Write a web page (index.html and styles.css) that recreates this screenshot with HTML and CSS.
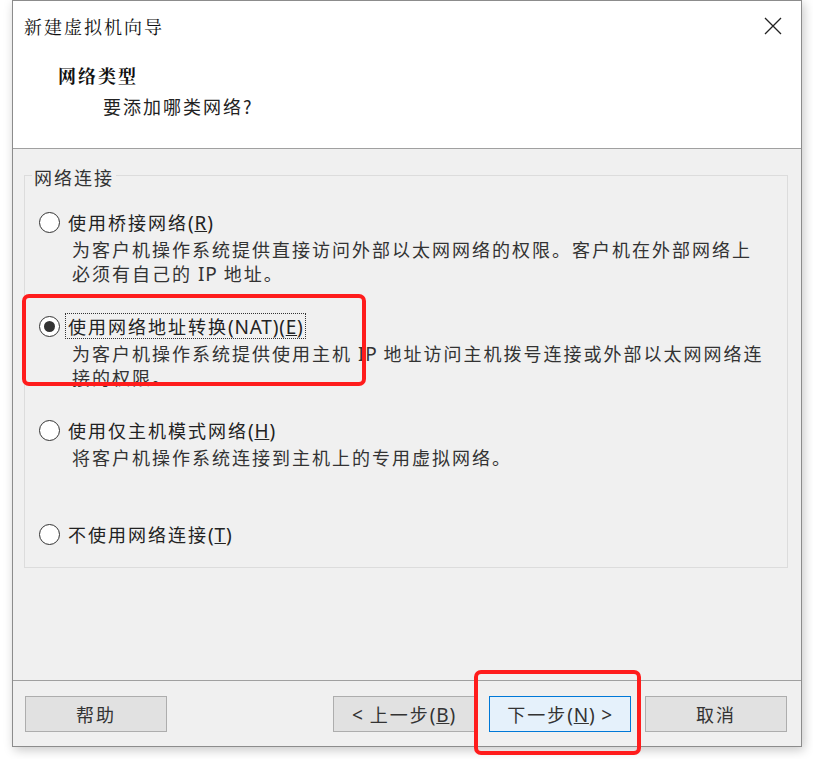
FILE: index.html
```html
<!DOCTYPE html>
<html lang="zh-CN">
<head>
<meta charset="utf-8">
<title>新建虚拟机向导</title>
<link rel="stylesheet" href="styles.css">
</head>
<body>
<div class="window">
  <div class="header">
    <div class="titlebar">
      <span class="title">新建虚拟机向导</span>
      <svg class="close" width="18" height="18" viewBox="0 0 18 18"><path d="M1 1 L17 17 M17 1 L1 17" stroke="#222" stroke-width="1.3" fill="none"/></svg>
    </div>
    <div class="heading">网络类型</div>
    <div class="subheading">要添加哪类网络?</div>
  </div>
  <div class="content">
    <fieldset class="group">
      <legend class="legend">网络连接</legend>
      <div class="option">
        <div class="opt-row"><span class="radio"></span><span class="label">使用桥接网络<span class="lat">(<u>R</u>)</span></span></div>
        <div class="desc">为客户机操作系统提供直接访问外部以太网网络的权限。客户机在外部网络上<br>必须有自己的 <span class="lat">IP</span> 地址。</div>
      </div>
      <div class="option">
        <div class="opt-row"><span class="radio checked"></span><span class="label focus">使用网络地址转换<span class="lat">(NAT)(<u>E</u>)</span></span></div>
        <div class="desc">为客户机操作系统提供使用主机 <span class="lat">IP</span> 地址访问主机拨号连接或外部以太网网络连<br>接的权限。</div>
      </div>
      <div class="option">
        <div class="opt-row"><span class="radio"></span><span class="label">使用仅主机模式网络<span class="lat">(<u>H</u>)</span></span></div>
        <div class="desc">将客户机操作系统连接到主机上的专用虚拟网络。</div>
      </div>
      <div class="option last">
        <div class="opt-row"><span class="radio"></span><span class="label">不使用网络连接<span class="lat">(<u>T</u>)</span></span></div>
      </div>
    </fieldset>
  </div>
  <div class="footer">
    <button class="btn">帮助</button>
    <div class="spacer"></div>
    <button class="btn"><span class="lat">&lt;</span> 上一步<span class="lat">(<u>B</u>)</span></button>
    <button class="btn primary">下一步<span class="lat">(<u>N</u>) &gt;</span></button>
    <button class="btn">取消</button>
  </div>
</div>
<div class="mark mark-nat"></div>
<div class="mark mark-next"></div>
</body>
</html>
```

FILE: styles.css
```css
* { box-sizing: border-box; }
html, body {
  margin: 0;
  padding: 0;
  background: #ffffff;
}
body {
  width: 813px;
  height: 759px;
  overflow: hidden;
  position: relative;
  font-family: "Noto Sans CJK SC", sans-serif;
  font-size: 18px;
  letter-spacing: 2px;
  color: #222;
}
.lat {
  font-family: "Noto Sans", "Noto Sans CJK SC", sans-serif;
  font-size: 19px;
  letter-spacing: 0.8px;
  line-height: 1;
}
.window {
  margin-left: 12px;
  width: 790px;
  height: 747px;
  border: 1px solid #8c8c8c;
  background: #f0f0f0;
  display: flex;
  flex-direction: column;
  box-shadow: 2px 3px 10px rgba(0, 0, 0, 0.22);
}
.header {
  background: #ffffff;
  height: 148px;
  border-bottom: 1px solid #a0a0a0;
  flex: none;
}
.titlebar {
  height: 50px;
  display: flex;
  align-items: center;
  justify-content: space-between;
  padding-left: 11px;
  padding-right: 19px;
}
.title {
  font-family: "Noto Serif CJK SC", "Noto Sans CJK SC", serif;
  font-size: 18px;
  line-height: 24px;
  color: #111;
  letter-spacing: 2px;
}
.close { display: block; }
.heading {
  margin-top: 12px;
  padding-left: 45px;
  font-family: "Noto Serif CJK SC", "Noto Sans CJK SC", serif;
  font-weight: bold;
  line-height: 24px;
  color: #111;
}
.subheading {
  margin-top: 7px;
  padding-left: 90px;
  line-height: 24px;
  color: #222;
}
.content {
  flex: 1;
  padding: 12px 13px 0 11px;
}
.group {
  margin: 0;
  border: 1px solid #dcdcdc;
  padding: 21px 0 0 14px;
  height: 407px;
  min-width: 0;
}
.legend {
  padding: 4px 2px 0 2px;
  margin-left: -7px;
  line-height: 24px;
  color: #333;
}
.option { margin-bottom: 29px; }
.option.last { margin-bottom: 0; }
.opt-row {
  display: flex;
  align-items: center;
  height: 24px;
}
.radio {
  width: 21px;
  height: 21px;
  border: 1px solid #333;
  border-radius: 50%;
  background: #fff;
  flex: none;
  display: flex;
  align-items: center;
  justify-content: center;
}
.radio.checked::after {
  content: "";
  width: 11px;
  height: 11px;
  border-radius: 50%;
  background: #333;
}
.label {
  margin-left: 5px;
  padding: 0 1px 0 2px;
  border: 1px dotted transparent;
  line-height: 24px;
  height: 26px;
  color: #222;
}
.label.focus { border-color: #333; }
.desc {
  margin-top: 3px;
  padding-left: 33px;
  height: 48px;
  line-height: 24px;
  color: #333;
  white-space: nowrap;
}
.footer {
  flex: none;
  height: 66px;
  border-top: 1px solid #a0a0a0;
  display: flex;
  align-items: flex-start;
  padding: 15px 14px 0 12px;
  gap: 14px;
}
.spacer { flex: 1; }
.btn {
  width: 142px;
  height: 36px;
  background: #e1e1e1;
  border: 1px solid #adadad;
  font-family: "Noto Sans CJK SC", sans-serif;
  font-size: 18px;
  letter-spacing: 2px;
  color: #333;
  padding: 0;
  margin: 0;
}
.btn.primary {
  background: #e5f1fb;
  border-color: #0078d7;
}
.mark {
  position: absolute;
  border: 4px solid #ff1c1c;
  border-radius: 7px;
}
.mark-nat { left: 22px; top: 294px; width: 344px; height: 92px; }
.mark-next { left: 474px; top: 670px; width: 167px; height: 85px; }
```
